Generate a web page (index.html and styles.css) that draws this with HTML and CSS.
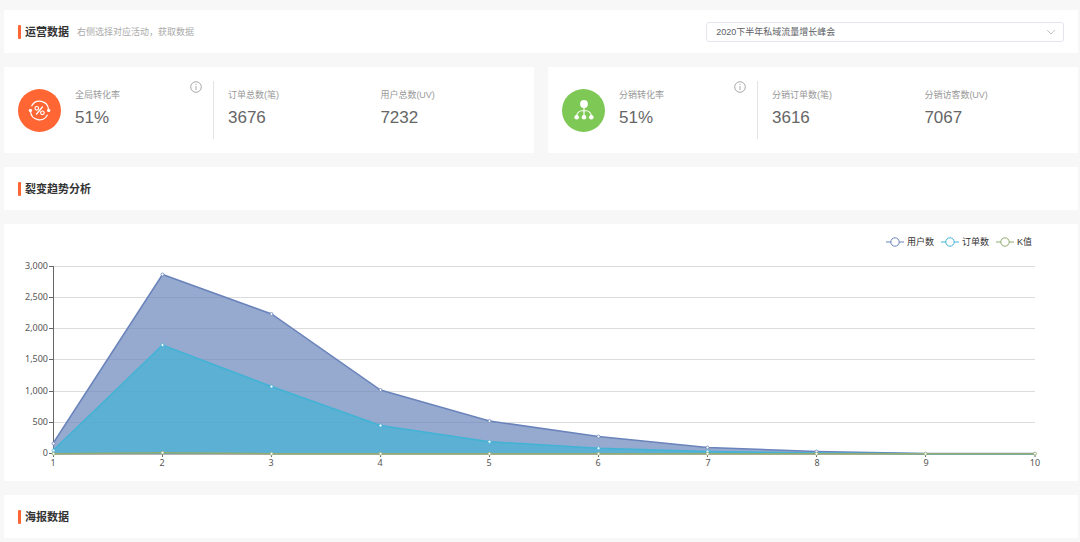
FILE: index.html
```html
<!DOCTYPE html>
<html lang="zh-CN">
<head>
<meta charset="utf-8">
<meta name="viewport" content="width=device-width, initial-scale=1">
<title>运营数据</title>
<link rel="stylesheet" href="styles.css">
</head>
<body>
<main class="page">
  <header class="panel heading">
    <h1 class="title">运营数据</h1>
    <label class="hint" for="activity">右侧选择对应活动，获取数据</label>
    <div class="picker">
      <select class="picker-select" id="activity">
        <option>2020下半年私域流量增长峰会</option>
      </select>
      <svg class="picker-arrow" viewBox="0 0 10 10" aria-hidden="true"><path d="M1.2 3 5 7l3.8-4"/></svg>
    </div>
  </header>

  <section class="cards">
    <article class="panel card">
      <div class="lead">
        <svg class="badge badge-orange" viewBox="0 0 43 43" aria-hidden="true">
          <g class="stroke">
            <path d="M13.5 17.2A9 9 0 0 1 30.5 20.5"/>
            <path d="M29.5 25.8A9 9 0 0 1 12.5 22.5"/>
            <path d="M24.8 17.5 18.2 25.5"/>
            <circle cx="18.8" cy="19.3" r="1.8"/>
            <circle cx="24.4" cy="23.8" r="1.8"/>
          </g>
          <circle class="solid" cx="30.7" cy="21.4" r="1.7"/>
          <circle class="solid" cx="12.4" cy="21.4" r="1.7"/>
        </svg>
        <div class="stat"><span class="label">全局转化率</span><strong class="value">51%</strong></div>
        <button class="info" type="button" aria-label="全局转化率说明">
          <svg viewBox="0 0 12 12"><circle cx="6" cy="6" r="5.3"/><path d="M6 5v4M6 2.8v1.2"/></svg>
        </button>
      </div>
      <div class="stat"><span class="label">订单总数(笔)</span><strong class="value">3676</strong></div>
      <div class="stat"><span class="label">用户总数(UV)</span><strong class="value">7232</strong></div>
    </article>
    <article class="panel card">
      <div class="lead">
        <svg class="badge badge-green" viewBox="0 0 43 43" aria-hidden="true">
          <path class="stroke" d="M22 15v13M14.5 28c0-3.8 3-6.5 7.5-6.5s7.500 2.700 7.500 6.500"/>
          <circle class="solid" cx="22" cy="15" r="3.9"/>
          <circle class="solid" cx="14.7" cy="28.3" r="2.3"/>
          <circle class="solid" cx="22" cy="28.3" r="2.3"/>
          <circle class="solid" cx="29.3" cy="28.3" r="2.3"/>
        </svg>
        <div class="stat"><span class="label">分销转化率</span><strong class="value">51%</strong></div>
        <button class="info" type="button" aria-label="分销转化率说明">
          <svg viewBox="0 0 12 12"><circle cx="6" cy="6" r="5.3"/><path d="M6 5v4M6 2.8v1.2"/></svg>
        </button>
      </div>
      <div class="stat"><span class="label">分销订单数(笔)</span><strong class="value">3616</strong></div>
      <div class="stat"><span class="label">分销访客数(UV)</span><strong class="value">7067</strong></div>
    </article>
  </section>

  <section class="panel heading"><h2 class="title">裂变趋势分析</h2></section>

  <section class="panel trend">
    <ul class="legend">
      <li class="legend-item users"><svg class="legend-mark" viewBox="0 0 18 10"><path d="M0 5h18"/><circle cx="9" cy="5" r="4.2"/></svg>用户数</li>
      <li class="legend-item orders"><svg class="legend-mark" viewBox="0 0 18 10"><path d="M0 5h18"/><circle cx="9" cy="5" r="4.2"/></svg>订单数</li>
      <li class="legend-item ratio"><svg class="legend-mark" viewBox="0 0 18 10"><path d="M0 5h18"/><circle cx="9" cy="5" r="4.2"/></svg>K值</li>
    </ul>
    <svg class="chart" viewBox="0 0 1074 233" role="img" aria-label="用户数、订单数与K值趋势">
      <path class="grid" d="M49 18.5H1031M49 49.5H1031M49 80.5H1031M49 111.5H1031M49 143.5H1031M49 174.5H1031"/>
      <g class="axis">
        <path d="M49.5 18V206M49 206H1031"/>
        <path d="M45 18.5h4M45 49.5h4M45 80.5h4M45 111.5h4M45 143.5h4M45 174.5h4M45 205.5h4"/>
        <path d="M49.5 206v3M158.5 206v3M267.5 206v3M376.5 206v3M485.5 206v3M594.5 206v3M703.5 206v3M812.5 206v3M921.5 206v3M1031 206v3"/>
      </g>
      <g class="users">
        <path class="area" d="M49 206V195.5L158.500 26.5 267.500 66 376.500 142 485.500 173 594.500 188.5 703.500 199.5 812.500 203.5 921.500 205.5 1031 205.5V206z"/>
        <path class="line" d="M49 195.5L158.500 26.5 267.500 66 376.500 142 485.500 173 594.500 188.5 703.500 199.5 812.500 203.5 921.500 205.5 1031 205.5"/>
      </g>
      <g class="orders">
        <path class="area" d="M49 206V202.5L158.500 97 267.500 138.5 376.500 177.5 485.500 193.7 594.500 200.2 703.500 203.5 812.500 205 921.500 205.7 1031 205.7V206z"/>
        <path class="line" d="M49 202.5L158.500 97 267.500 138.5 376.500 177.5 485.500 193.7 594.500 200.2 703.500 203.5 812.500 205 921.500 205.7 1031 205.7"/>
      </g>
      <g class="ratio"><path class="line" d="M49 205.7L158.500 204.7 267.500 205.7H1031"/></g>
      <g class="users dots">
        <circle cx="49.500" cy="195.5" r="1.5"/><circle cx="158.5" cy="26.5" r="1.5"/><circle cx="267.5" cy="66" r="1.5"/><circle cx="376.5" cy="142" r="1.5"/><circle cx="485.5" cy="173" r="1.5"/><circle cx="594.5" cy="188.5" r="1.5"/><circle cx="703.5" cy="199.5" r="1.5"/><circle cx="812.5" cy="203.5" r="1.5"/>
      </g>
      <g class="orders dots">
        <circle cx="49.5" cy="202.5" r="1.5"/><circle cx="158.5" cy="97" r="1.5"/><circle cx="267.5" cy="138.5" r="1.5"/><circle cx="376.5" cy="177.5" r="1.5"/><circle cx="485.5" cy="193.7" r="1.5"/><circle cx="594.5" cy="200.2" r="1.5"/><circle cx="703.5" cy="203.5" r="1.5"/>
      </g>
      <g class="ratio dots">
        <circle cx="49.5" cy="205.7" r="1.5"/><circle cx="158.5" cy="204.7" r="1.5"/><circle cx="267.5" cy="205.7" r="1.5"/><circle cx="376.5" cy="205.7" r="1.5"/><circle cx="485.5" cy="205.7" r="1.5"/><circle cx="594.5" cy="205.7" r="1.5"/><circle cx="703.5" cy="205.7" r="1.5"/><circle cx="812.5" cy="205.7" r="1.5"/><circle cx="921.5" cy="205.7" r="1.5"/><circle cx="1031" cy="205.7" r="1.5"/>
      </g>
      <g class="tick tick-y">
        <text x="44" y="21">3,000</text><text x="44" y="52">2,500</text><text x="44" y="83">2,000</text><text x="44" y="114">1,500</text><text x="44" y="146">1,000</text><text x="44" y="177">500</text><text x="44" y="208">0</text>
      </g>
      <g class="tick tick-x">
        <text x="49" y="218">1</text><text x="158" y="218">2</text><text x="267" y="218">3</text><text x="376" y="218">4</text><text x="485" y="218">5</text><text x="594" y="218">6</text><text x="704" y="218">7</text><text x="813" y="218">8</text><text x="922" y="218">9</text><text x="1031" y="218">10</text>
      </g>
    </svg>
  </section>

  <section class="panel heading"><h2 class="title">海报数据</h2></section>
</main>
</body>
</html>
```
FILE: styles.css
```css
* { box-sizing: border-box; }

body {
  margin: 0;
  background: #f7f7f7;
  color: #333;
  font-family: "Liberation Sans", "Noto Sans CJK SC", sans-serif;
  font-size: 9px;
  line-height: 12px;
}

.page {
  display: flex;
  flex-direction: column;
  gap: 14px;
  padding: 10px 2px 4px 4px;
}

.panel { background: #fff; }

.heading {
  display: flex;
  align-items: center;
  min-height: 43px;
  padding: 0 14px;
}

.title {
  display: flex;
  align-items: center;
  gap: 4px;
  margin: 0;
  font-size: 11px;
  line-height: 14px;
  font-weight: 700;
}

.title::before {
  content: "";
  width: 3px;
  height: 14px;
  border-radius: 1px;
  background: #ff6633;
}

.hint {
  margin-left: 8px;
  color: #aaa;
}

.picker {
  position: relative;
  width: calc(100% / 3 + 9px);
  margin-left: auto;
}

.picker-select {
  display: block;
  width: 100%;
  height: 20px;
  padding: 0 24px 0 9px;
  appearance: none;
  border: 1px solid #e4e6ee;
  border-radius: 3px;
  background: #fff;
  color: #606266;
  font: inherit;
}

.picker-arrow {
  position: absolute;
  top: 5px;
  right: 8px;
  width: 10px;
  height: 10px;
  fill: none;
  stroke: #c0c4cc;
  pointer-events: none;
}

.cards {
  display: grid;
  grid-template-columns: 1fr 1fr;
  gap: 14px;
}

.card {
  display: grid;
  grid-template-columns: 210px 10fr 11fr;
  padding: 14px 0;
}

.lead {
  display: flex;
  align-items: center;
  gap: 14px;
  min-height: 58px;
  padding: 0 11px 0 14px;
  border-right: 1px solid #e4e4e4;
}

.badge {
  flex: none;
  width: 43px;
  height: 43px;
  border-radius: 50%;
}

.badge-orange { background: #ff6633; }
.badge-green { background: #7ec855; }
.badge .stroke { fill: none; stroke: #fff; stroke-width: 1.2; }
.badge .solid { fill: #fff; }

.stat {
  display: flex;
  flex-direction: column;
  justify-content: center;
  gap: 7px;
  padding-bottom: 3px;
}

.card > .stat { padding-left: 14px; }
.label { color: #999; }

.value {
  color: #666;
  font-size: 17px;
  line-height: 20px;
  font-weight: 400;
}

.info {
  align-self: flex-start;
  width: 12px;
  height: 12px;
  margin-left: auto;
  padding: 0;
  border: 0;
  background: none;
}

.info svg {
  display: block;
  fill: none;
  stroke: #aaa;
}

.users { --series: #6a84bb; }
.orders { --series: #42b3d5; }
.ratio { --series: #91ab70; }

.trend { padding-top: 12px; }

.legend {
  display: flex;
  justify-content: flex-end;
  gap: 7px;
  margin: 0;
  padding: 0 46px 0 0;
  list-style: none;
}

.legend-item {
  display: flex;
  align-items: center;
  gap: 3px;
}

.legend-mark {
  width: 18px;
  height: 10px;
  fill: #fff;
  stroke: var(--series);
}

.chart {
  display: block;
  width: 100%;
}

.grid { fill: none; stroke: #dcdcdc; }
.axis { fill: none; stroke: #666; }
.area { fill: var(--series); opacity: 0.7; }
.line { fill: none; stroke: var(--series); stroke-width: 1.5; }
.dots { fill: #fff; stroke: var(--series); stroke-width: 0.8; }

.tick {
  fill: #555;
  font-family: "Noto Sans", sans-serif;
  font-size: 9px;
}

.tick-y { text-anchor: end; }
.tick-x { text-anchor: middle; }
```
